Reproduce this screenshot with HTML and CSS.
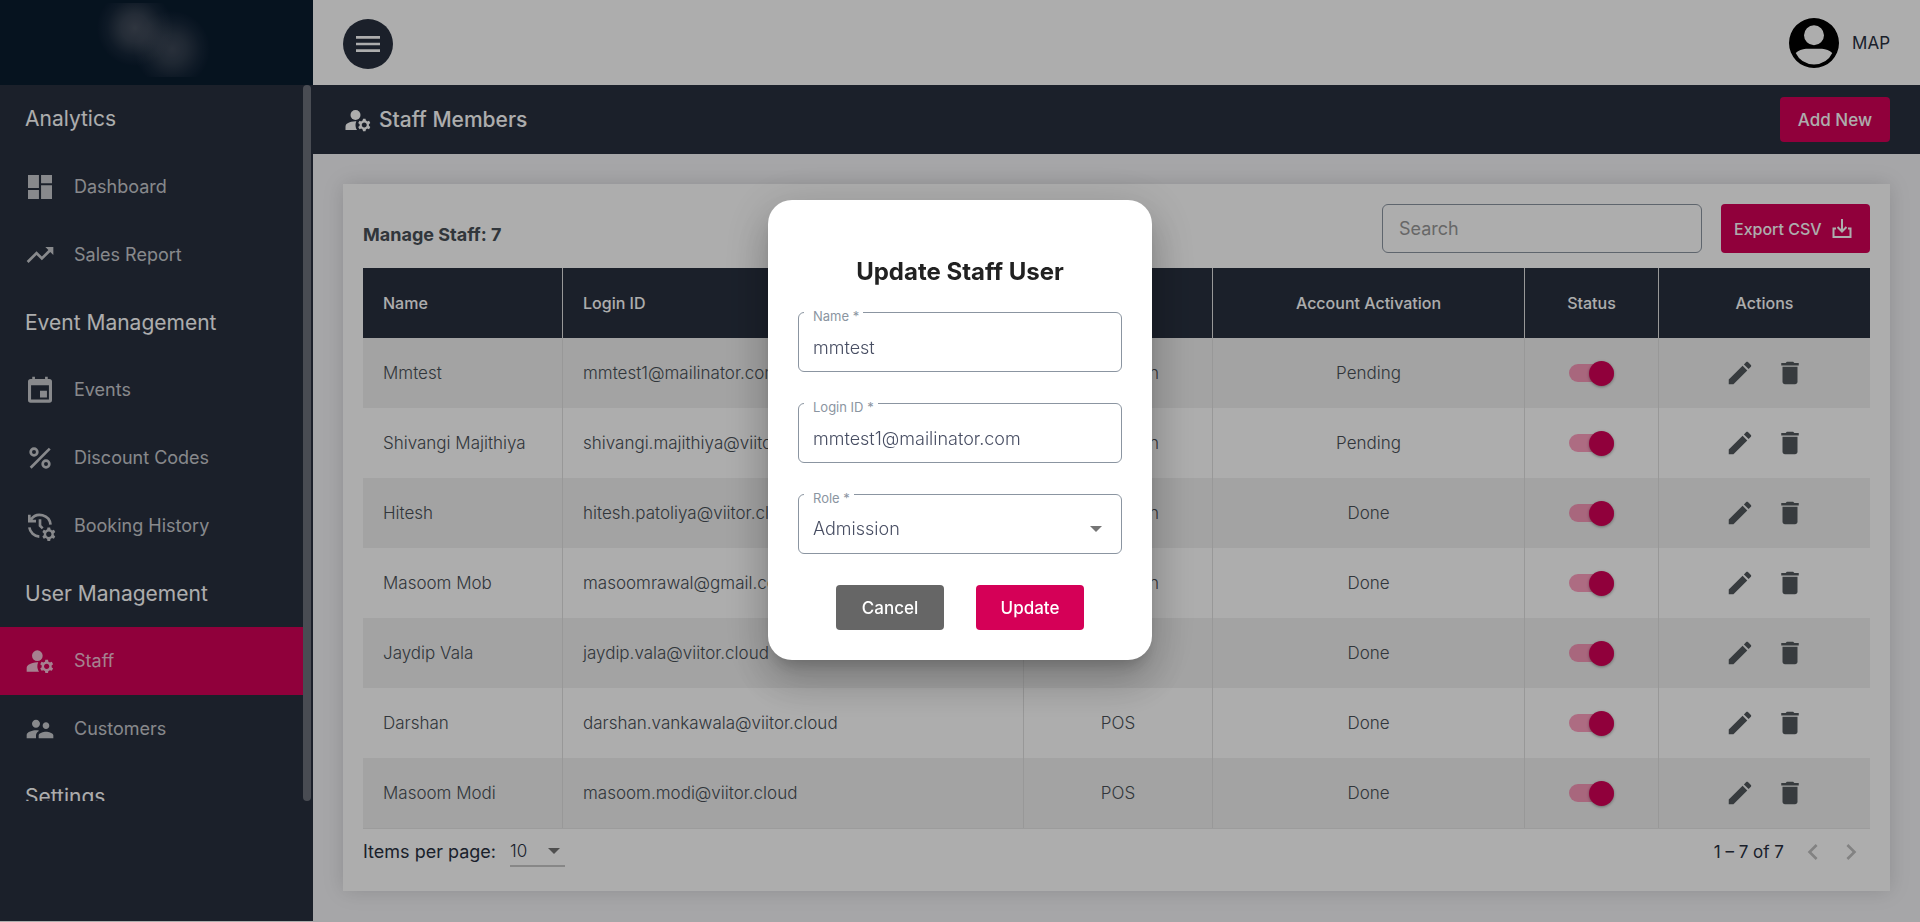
FILE: index.html
```html
<!DOCTYPE html>
<html lang="en">
<head>
<meta charset="utf-8">
<meta name="viewport" content="width=device-width, initial-scale=1">
<title>Staff Members</title>
<link rel="stylesheet" href="styles.css">
</head>
<body>
<svg class="sprite" aria-hidden="true">
  <symbol id="i-dashboard" viewBox="0 0 24 24"><path d="M3 3h8.2v9.7H3zM3 14.3h8.2V21H3zM12.8 3H21v6.2h-8.2zM12.8 10.7H21V21h-8.2z"/></symbol>
  <symbol id="i-trend" viewBox="0 0 24 24"><path d="M16 6l2.29 2.29-4.88 4.88-4-4L2 16.59 3.41 18l6-6 4 4 6.3-6.29L22 12V6z"/></symbol>
  <symbol id="i-event" viewBox="0 0 24 24"><path fill-rule="evenodd" d="M6.2 2h2v1.7h7.6V2h2v1.7H19a2 2 0 0 1 2 2v13.8a2 2 0 0 1-2 2H5a2 2 0 0 1-2-2V5.700a2 2 0 0 1 2-2h1.200zM5.300 8.500v10.700h13.400V8.500zM12 12.500h5.200v5.200H12z"/></symbol>
  <symbol id="i-percent" viewBox="0 0 24 24"><g fill="none" stroke="currentColor" stroke-width="2"><circle cx="7.500" cy="7.500" r="2.500"/><circle cx="16.500" cy="16.500" r="2.500"/><path d="M5 19.300L19.300 5"/></g></symbol>
  <symbol id="i-history" viewBox="0 0 24 24"><g fill="none" stroke="currentColor" stroke-width="2"><path d="M5.200 7.200A8.100 8.100 0 0 1 19.900 11M4 13a8.100 8.100 0 0 0 7.500 7M4 3.500V8.300H9M12 7v4.800l2 2"/></g><path transform="translate(1.600 2.200)" d="M20.750 16c0-.22-.03-.42-.06-.63l1.140-1.010-1-1.730-1.450.49c-.32-.27-.68-.48-1.080-.63L18 11h-2l-.3 1.490c-.4.15-.76.36-1.080.63l-1.450-.49-1 1.730 1.140 1.010c-.03.21-.06.41-.06.63s.03.42.06.63l-1.140 1.010 1 1.730 1.450-.49c.32.27.68.48 1.080.63L16 21h2l.3-1.490c.4-.15.76-.36 1.080-.63l1.450.49 1-1.730-1.140-1.010c.03-.21.06-.41.06-.63zM17 18c-1.100 0-2-.9-2-2s.9-2 2-2 2 .9 2 2-.9 2-2 2z"/></symbol>
  <symbol id="i-staff" viewBox="0 0 24 24"><circle cx="10" cy="8" r="4"/><path d="M10.670 13.020C10.450 13.010 10.230 13 10 13c-2.420 0-4.680.67-6.610 1.820C2.510 15.340 2 16.320 2 17.350V20h9.260C10.470 18.870 10 17.490 10 16c0-1.070.25-2.070.67-2.980zM20.750 16c0-.22-.03-.42-.06-.63l1.140-1.010-1-1.730-1.450.49c-.32-.27-.68-.48-1.080-.63L18 11h-2l-.3 1.490c-.4.15-.76.36-1.080.63l-1.450-.49-1 1.730 1.140 1.010c-.03.21-.06.41-.06.63s.03.42.06.63l-1.140 1.010 1 1.730 1.450-.49c.32.27.68.48 1.080.63L16 21h2l.3-1.490c.4-.15.76-.36 1.080-.63l1.450.49 1-1.730-1.140-1.010c.03-.21.06-.41.06-.63zM17 18c-1.100 0-2-.9-2-2s.9-2 2-2 2 .9 2 2-.9 2-2 2z"/></symbol>
  <symbol id="i-people" viewBox="0 0 24 24"><path d="M16.500 12c1.380 0 2.490-1.120 2.490-2.500S17.880 7 16.500 7 14 8.120 14 9.500s1.120 2.500 2.500 2.500zM9 11c1.660 0 2.990-1.340 2.990-3S10.660 5 9 5 6 6.340 6 8s1.340 3 3 3zm7.500 3c-1.830 0-5.500.92-5.500 2.750V19h11v-2.250c0-1.830-3.670-2.750-5.500-2.750zM9 13c-2.330 0-7 1.170-7 3.500V19h7v-2.250c0-.85.33-2.340 2.370-3.470C10.500 13.100 9.660 13 9 13z"/></symbol>
  <symbol id="i-menu" viewBox="0 0 24 24"><path d="M3 18h18v-2H3v2zm0-5h18v-2H3v2zm0-7v2h18V6H3z"/></symbol>
  <symbol id="i-edit" viewBox="0 0 24 24"><path d="M3 17.250V21h3.750L17.810 9.940l-3.750-3.750L3 17.250zM20.710 7.040c.39-.39.39-1.020 0-1.410l-2.340-2.340c-.39-.39-1.020-.39-1.410 0l-1.830 1.830 3.750 3.750 1.830-1.830z"/></symbol>
  <symbol id="i-delete" viewBox="0 0 24 24"><path d="M6 19c0 1.100.9 2 2 2h8c1.100 0 2-.9 2-2V7H6v12zM19 4h-3.500l-1-1h-5l-1 1H5v2h14V4z"/></symbol>
  <symbol id="i-download" viewBox="0 0 24 24"><path fill="none" stroke="currentColor" stroke-width="2" d="M6 11.500H3.500v8.500h17V11.500H18M12 2v12M7.500 10L12 14.500l4.500-4.500"/></symbol>
  <symbol id="i-left" viewBox="0 0 24 24"><path d="M15.410 7.410L14 6l-6 6 6 6 1.410-1.410L10.830 12z"/></symbol>
  <symbol id="i-right" viewBox="0 0 24 24"><path d="M10 6L8.590 7.410 13.170 12l-4.580 4.590L10 18l6-6z"/></symbol>
  <symbol id="i-caret" viewBox="0 0 12 6"><path d="M0 0h12L6 6z"/></symbol>
</svg>

<div class="app">
  <aside class="sidebar">
    <div class="brand"><div class="brand-mark"></div></div>
    <div class="nav-scroll">
      <nav class="nav" aria-label="Main">
        <h2 class="nav-title">Analytics</h2>
        <a class="nav-link" href="#"><svg class="nav-icon"><use href="#i-dashboard"/></svg>Dashboard</a>
        <a class="nav-link" href="#"><svg class="nav-icon"><use href="#i-trend"/></svg>Sales Report</a>
        <h2 class="nav-title">Event Management</h2>
        <a class="nav-link" href="#"><svg class="nav-icon"><use href="#i-event"/></svg>Events</a>
        <a class="nav-link" href="#"><svg class="nav-icon"><use href="#i-percent"/></svg>Discount Codes</a>
        <a class="nav-link" href="#"><svg class="nav-icon"><use href="#i-history"/></svg>Booking History</a>
        <h2 class="nav-title">User Management</h2>
        <a class="nav-link active" href="#" aria-current="page"><svg class="nav-icon"><use href="#i-staff"/></svg>Staff</a>
        <a class="nav-link" href="#"><svg class="nav-icon"><use href="#i-people"/></svg>Customers</a>
        <h2 class="nav-title">Settings</h2>
      </nav>
      <div class="nav-thumb"></div>
    </div>
  </aside>

  <div class="page">
    <header class="topbar">
      <button class="menu-btn" type="button" aria-label="Toggle menu"><svg class="menu-icon"><use href="#i-menu"/></svg></button>
      <a class="user" href="#">
        <svg class="avatar" viewBox="0 0 50 50" aria-hidden="true"><path fill-rule="evenodd" d="M25 0a25 25 0 1 1 0 50a25 25 0 1 1 0-50zM25 7.300a10 10 0 1 0 0 20a10 10 0 1 0 0-20zM6.700 35Q11 31 17 30.700H33Q39 31 43.300 35Q38 46 25 46.400Q12 46 6.700 35z"/></svg>
        <span>MAP</span>
      </a>
    </header>

    <div class="titlebar">
      <h1 class="page-title"><svg class="title-icon"><use href="#i-staff"/></svg>Staff Members</h1>
      <button class="btn btn-primary" type="button">Add New</button>
    </div>

    <main class="content">
      <section class="card">
        <div class="tools">
          <h2 class="count">Manage Staff: 7</h2>
          <div class="tool-set">
            <input class="search" type="search" placeholder="Search" aria-label="Search">
            <button class="btn btn-primary btn-export" type="button">Export CSV<svg class="export-icon"><use href="#i-download"/></svg></button>
          </div>
        </div>

        <table class="staff">
          <colgroup><col class="c-name"><col><col class="c-role"><col class="c-act"><col class="c-status"><col class="c-tools"></colgroup>
          <thead>
            <tr><th scope="col">Name</th><th scope="col">Login ID</th><th scope="col">Role</th><th scope="col">Account Activation</th><th scope="col">Status</th><th scope="col">Actions</th></tr>
          </thead>
          <tbody>
            <tr><td>Mmtest</td><td>mmtest1@mailinator.com</td><td>Admission</td><td>Pending</td><td><input class="switch" type="checkbox" checked aria-label="Mmtest active"></td><td><div class="actions"><button type="button" aria-label="Edit"><svg><use href="#i-edit"/></svg></button><button type="button" aria-label="Delete"><svg><use href="#i-delete"/></svg></button></div></td></tr>
            <tr><td>Shivangi Majithiya</td><td>shivangi.majithiya@viitor.cloud</td><td>Admission</td><td>Pending</td><td><input class="switch" type="checkbox" checked aria-label="Shivangi Majithiya active"></td><td><div class="actions"><button type="button" aria-label="Edit"><svg><use href="#i-edit"/></svg></button><button type="button" aria-label="Delete"><svg><use href="#i-delete"/></svg></button></div></td></tr>
            <tr><td>Hitesh</td><td>hitesh.patoliya@viitor.cloud</td><td>Admission</td><td>Done</td><td><input class="switch" type="checkbox" checked aria-label="Hitesh active"></td><td><div class="actions"><button type="button" aria-label="Edit"><svg><use href="#i-edit"/></svg></button><button type="button" aria-label="Delete"><svg><use href="#i-delete"/></svg></button></div></td></tr>
            <tr><td>Masoom Mob</td><td>masoomrawal@gmail.com</td><td>Admission</td><td>Done</td><td><input class="switch" type="checkbox" checked aria-label="Masoom Mob active"></td><td><div class="actions"><button type="button" aria-label="Edit"><svg><use href="#i-edit"/></svg></button><button type="button" aria-label="Delete"><svg><use href="#i-delete"/></svg></button></div></td></tr>
            <tr><td>Jaydip Vala</td><td>jaydip.vala@viitor.cloud</td><td>POS</td><td>Done</td><td><input class="switch" type="checkbox" checked aria-label="Jaydip Vala active"></td><td><div class="actions"><button type="button" aria-label="Edit"><svg><use href="#i-edit"/></svg></button><button type="button" aria-label="Delete"><svg><use href="#i-delete"/></svg></button></div></td></tr>
            <tr><td>Darshan</td><td>darshan.vankawala@viitor.cloud</td><td>POS</td><td>Done</td><td><input class="switch" type="checkbox" checked aria-label="Darshan active"></td><td><div class="actions"><button type="button" aria-label="Edit"><svg><use href="#i-edit"/></svg></button><button type="button" aria-label="Delete"><svg><use href="#i-delete"/></svg></button></div></td></tr>
            <tr><td>Masoom Modi</td><td>masoom.modi@viitor.cloud</td><td>POS</td><td>Done</td><td><input class="switch" type="checkbox" checked aria-label="Masoom Modi active"></td><td><div class="actions"><button type="button" aria-label="Edit"><svg><use href="#i-edit"/></svg></button><button type="button" aria-label="Delete"><svg><use href="#i-delete"/></svg></button></div></td></tr>
          </tbody>
        </table>

        <div class="pager">
          <div class="pager-size">
            <label for="page-size">Items per page:</label>
            <div class="pager-select">
              <select id="page-size"><option>10</option><option>25</option><option>50</option></select>
              <svg class="caret"><use href="#i-caret"/></svg>
            </div>
          </div>
          <div class="pager-nav">
            <span class="pager-range">1 – 7 of 7</span>
            <button type="button" disabled aria-label="Previous page"><svg><use href="#i-left"/></svg></button>
            <button type="button" disabled aria-label="Next page"><svg><use href="#i-right"/></svg></button>
          </div>
        </div>
      </section>
    </main>
  </div>
</div>

<div class="overlay">
  <form class="dialog" role="dialog" aria-modal="true" aria-labelledby="dialog-title">
    <h2 class="dialog-title" id="dialog-title">Update Staff User</h2>
    <div class="field">
      <label for="f-name">Name *</label>
      <input id="f-name" type="text" value="mmtest">
    </div>
    <div class="field">
      <label for="f-login">Login ID *</label>
      <input id="f-login" type="text" value="mmtest1@mailinator.com">
    </div>
    <div class="field">
      <label for="f-role">Role *</label>
      <select id="f-role"><option>Admission</option><option>POS</option></select>
      <svg class="caret field-caret"><use href="#i-caret"/></svg>
    </div>
    <div class="dialog-actions">
      <button class="btn btn-muted" type="button">Cancel</button>
      <button class="btn btn-primary" type="button">Update</button>
    </div>
  </form>
</div>
</body>
</html>
```
FILE: styles.css
```css
:root {
  --navy: #28303f;
  --pink: #d50057;
  --text: #495057;
  --ink: #28303f;
  --outline: #8b95a1;
}

* { box-sizing: border-box; }

body {
  margin: 0;
  background: #fff;
  color: var(--ink);
  font-family: Inter, "Noto Sans", sans-serif;
  font-size: 16px;
  line-height: 24px;
}

h1, h2 { margin: 0; }
button, input, select { font: inherit; }
button { cursor: pointer; }
svg { display: block; fill: currentColor; }
.sprite { display: none; }

.app {
  display: grid;
  grid-template-columns: 313px minmax(0, 1fr);
  min-height: 100vh;
}

/* Sidebar */
.sidebar {
  height: calc(100vh - 1px);
  background: var(--navy);
}

.brand {
  height: 85px;
  padding: 3px 0 8px;
  background: #0a1c2f;
}

.brand-mark {
  height: 100%;
  background:
    radial-gradient(circle at 135px 25px, rgba(130, 130, 140, .5) 0, rgba(130, 130, 140, .36) 14px, rgba(130, 130, 140, .1) 28px, rgba(130, 130, 140, 0) 38px),
    radial-gradient(circle at 172px 46px, rgba(130, 130, 140, .42) 0, rgba(130, 130, 140, .3) 14px, rgba(130, 130, 140, .1) 28px, rgba(130, 130, 140, 0) 38px);
}

.nav-scroll {
  display: flex;
  height: calc(100vh - 206px);
  padding-right: 2px;
  overflow: hidden;
}

.nav { flex: 1; }

.nav-thumb {
  width: 8px;
  border-radius: 4px;
  background: #6c717b;
}

.nav-title,
.nav-link {
  display: flex;
  align-items: center;
  height: 68px;
}

.nav-title {
  padding: 0 25px;
  color: #fff;
  font-size: 21px;
  font-weight: 400;
}

.nav-link + .nav-title { height: 67px; }

.nav-link {
  gap: 18px;
  padding: 0 24px;
  color: rgba(255, 255, 255, .75);
  font-size: 18px;
  text-decoration: none;
}

.nav-link.active { background: var(--pink); }
.nav-icon { width: 32px; height: 32px; }

/* Header */
.page {
  display: flex;
  flex-direction: column;
  background: #f5f5f8;
}

.topbar {
  display: flex;
  align-items: center;
  justify-content: space-between;
  height: 85px;
  padding: 0 30px;
  background: #fff;
}

.menu-btn {
  display: grid;
  place-items: center;
  width: 50px;
  height: 50px;
  margin-top: 2px;
  padding: 0;
  border: 0;
  border-radius: 50%;
  background: var(--navy);
  color: #fff;
}

.menu-icon { width: 32px; height: 32px; }

.user {
  display: flex;
  align-items: center;
  gap: 13px;
  color: var(--ink);
  font-size: 17px;
  text-decoration: none;
}

.avatar { width: 50px; height: 50px; fill: #000; }

.titlebar {
  display: flex;
  align-items: center;
  justify-content: space-between;
  height: 69px;
  padding: 0 30px;
  background: var(--navy);
  color: #fff;
}

.page-title {
  display: flex;
  align-items: center;
  gap: 6px;
  font-size: 21px;
  font-weight: 500;
}

.title-icon { width: 30px; height: 30px; }

.btn {
  min-width: 108px;
  height: 45px;
  padding: 0 18px;
  border: 0;
  border-radius: 4px;
  color: #fff;
  font-size: 17px;
  font-weight: 500;
}

.btn-primary { background: var(--pink); }
.btn-muted { background: #666; }

/* Card */
.content { padding: 30px; }

.card {
  padding: 20px 20px 24px;
  background: #fff;
  box-shadow: 0 0 20px rgba(0, 0, 0, .14);
}

.tools {
  display: flex;
  align-items: center;
  justify-content: space-between;
  margin-bottom: 15px;
}

.count {
  padding-top: 12px;
  color: var(--text);
  font-size: 18px;
  font-weight: 700;
}

.tool-set { display: flex; gap: 19px; }

.search {
  width: 320px;
  height: 49px;
  padding: 0 16px;
  border: 1px solid var(--outline);
  border-radius: 6px;
  background: #fff;
  color: var(--ink);
  font-size: 18px;
}

.search::placeholder { color: #999; }

.btn-export {
  display: flex;
  align-items: center;
  justify-content: space-between;
  width: 149px;
  height: 49px;
  padding: 0 16px 0 13px;
  font-size: 16px;
}

.export-icon { width: 24px; height: 24px; }

.staff {
  width: 100%;
  border-collapse: separate;
  border-spacing: 0;
  border-bottom: 1px solid #e6e6e6;
  table-layout: fixed;
}

.c-name { width: 200px; }
.c-role { width: 189px; }
.c-act { width: 312px; }
.c-status { width: 134px; }
.c-tools { width: 211px; }

.staff th,
.staff td {
  height: 70px;
  padding: 0 20px;
  border-right: 1px solid #e0e0e0;
  text-align: center;
  white-space: nowrap;
}

.staff th {
  background: var(--navy);
  color: #fff;
  font-size: 16px;
  font-weight: 500;
}

.staff td {
  color: var(--text);
  font-size: 17px;
  font-weight: 300;
}

.staff th:nth-child(-n+2),
.staff td:nth-child(-n+2) { text-align: left; }
.staff th:last-child,
.staff td:last-child { border-right: 0; }
.staff tbody tr:nth-child(odd) { background: #f0f0f0; }

.switch {
  display: flex;
  align-items: center;
  justify-content: flex-end;
  width: 45px;
  height: 18px;
  margin: 0 auto;
  border-radius: 9px;
  background: rgba(255, 64, 129, .5);
  appearance: none;
}

.switch::after {
  content: "";
  flex: none;
  width: 25px;
  height: 25px;
  border-radius: 50%;
  background: var(--pink);
  box-shadow: 0 1px 3px rgba(0, 0, 0, .35);
}

.actions {
  display: flex;
  justify-content: center;
  gap: 20px;
}

.actions button,
.pager-nav button {
  padding: 0;
  border: 0;
  background: none;
  color: #52585c;
}

.actions svg { width: 30px; height: 30px; }

.pager {
  display: flex;
  align-items: center;
  justify-content: space-between;
  height: 30px;
  margin-top: 8px;
}

.pager-size,
.pager-nav {
  display: flex;
  align-items: center;
}

.pager-size { gap: 14px; font-size: 18px; }

.pager-select {
  display: flex;
  align-items: center;
  width: 55px;
  height: 30px;
  border-bottom: 2px solid #c8c8c8;
}

.pager-select select {
  width: 100%;
  padding: 0;
  border: 0;
  background: none;
  color: var(--ink);
  font-size: 17px;
  font-weight: 300;
  appearance: none;
}

.caret {
  flex: none;
  width: 12px;
  height: 6px;
  color: #757575;
  pointer-events: none;
}

.pager-select .caret { margin: 0 5px 0 -17px; }

.pager-range { margin-right: 10px; font-size: 17px; }
.pager-nav button { width: 38px; color: #c0c0c0; }
.pager-nav svg { width: 32px; height: 32px; margin: 0 auto; }

/* Dialog */
.overlay {
  position: fixed;
  inset: 0;
  display: flex;
  align-items: flex-start;
  justify-content: center;
  padding-top: 200px;
  background: rgba(0, 0, 0, .32);
}

.dialog {
  width: 384px;
  padding: 54px 30px 30px;
  border-radius: 24px;
  background: #fff;
  box-shadow:
    0 11px 15px -7px rgba(0, 0, 0, .2),
    0 24px 38px 3px rgba(0, 0, 0, .14),
    0 9px 46px 8px rgba(0, 0, 0, .12);
}

.dialog-title {
  margin-bottom: 22px;
  color: #212121;
  font-size: 24px;
  font-weight: 700;
  line-height: 36px;
  text-align: center;
}

.field {
  position: relative;
  margin-bottom: 31px;
}

.field label {
  position: absolute;
  top: -5px;
  left: 6px;
  padding: 0 4px 0 9px;
  background: #fff;
  color: var(--outline);
  font-size: 13px;
  line-height: 18px;
}

.field input,
.field select {
  display: block;
  width: 100%;
  height: 60px;
  padding: 10px 14px 0;
  border: 1px solid var(--outline);
  border-radius: 6px;
  background: #fff;
  color: #484e63;
  font-size: 18px;
  font-weight: 300;
  appearance: none;
}

.field-caret {
  position: absolute;
  top: 32px;
  right: 20px;
}

.dialog-actions {
  display: flex;
  justify-content: center;
  gap: 32px;
}
```
